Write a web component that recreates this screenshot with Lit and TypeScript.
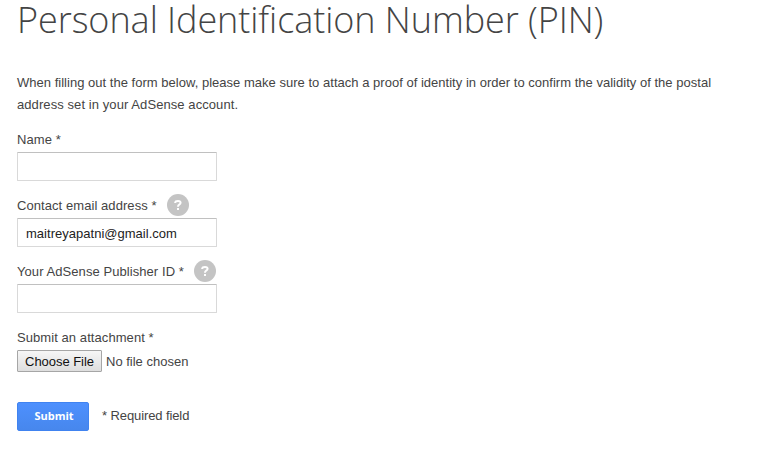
import { LitElement, html, css, nothing } from "lit";
import { customElement, property } from "lit/decorators.js";

@customElement("form-field")
class FormField extends LitElement {
  @property() label = "";
  @property() value = "";
  @property({ type: Boolean }) help = false;
  @property({ type: Boolean }) file = false;

  static styles = css`
    :host { display: block; height: 66px; }
    .label {
      display: flex; align-items: center; height: 23px; gap: 10.5px;
      box-sizing: border-box; padding-bottom: 1px; white-space: pre;
    }
    .help { width: 22px; height: 22px; flex: none; margin-top: -2px; }
    .disc { fill: #c4c4c4; }
    .mark { fill: none; stroke: #fff; stroke-width: 2; }
    .dot { fill: #fff; }
    .input {
      display: block; box-sizing: border-box; width: 200px; height: 29px; margin: 0;
      border: 1px solid #d9d9d9; border-top-color: #c0c0c0; border-radius: 1px;
      padding: 1px 8px 0; background: #fff; color: #222; outline: none;
      font: inherit; letter-spacing: 0.02px;
    }
    .picker { display: flex; align-items: center; gap: 4px; height: 22px; }
    .choose {
      box-sizing: border-box; width: 85px; height: 22px; padding: 0; margin: 0;
      border: 1px solid #a6a6a6; border-radius: 1px; white-space: nowrap;
      background: linear-gradient(#f6f6f6, #dedede); color: #111;
      font: inherit; line-height: 22px; letter-spacing: -0.04px;
    }
    .none { letter-spacing: 0; white-space: nowrap; padding-top: 2px; }
  `;

  render() {
    return html`
      <div class="label"><span>${this.label} *</span>${this.help
        ? html`<svg class="help" viewBox="0 0 22 22">
            <circle class="disc" cx="11" cy="11" r="11" />
            <path class="mark" d="M8.2 9V8.5Q8.4 6.9 11 6.9Q13.6 6.9 13.6 8.8Q13.6 10 12.2 10.7Q11 11.3 11 12.8" />
            <rect class="dot" x="10" y="14" width="2" height="2" />
          </svg>`
        : nothing}</div>
      ${this.file
        ? html`<div class="picker"><button class="choose">Choose File</button><span class="none">No file chosen</span></div>`
        : html`<input class="input" .value=${this.value} />`}
    `;
  }
}

@customElement("app-root")
class AppRoot extends LitElement {
  static styles = css`
    :host {
      display: block; box-sizing: border-box; width: 757px; height: 453px;
      padding-left: 17px; background: #fff; color: #444;
      font: 13px/22px "Liberation Sans", Arial, sans-serif; letter-spacing: 0.07px;
    }
    .title {
      margin: 0; height: 72px; line-height: 40px; white-space: nowrap; color: #444;
      font-family: "Open Sans", sans-serif; font-weight: 300; font-size: 36px; letter-spacing: -0.06px;
    }
    .intro { margin: 0 0 13px; white-space: nowrap; letter-spacing: 0.02px; }
    .tail { letter-spacing: 0.08px; }
    .actions { display: flex; align-items: center; gap: 13px; margin-top: 9px; height: 29px; }
    .submit {
      box-sizing: border-box; width: 72px; height: 29px; padding: 0 0 2px 2px; margin: 0;
      border: 1px solid #4083f0; border-radius: 2px; color: #fff;
      background: linear-gradient(#4d90fe, #4787ed);
      font: bold 11px "Open Sans", sans-serif; letter-spacing: 0;
    }
    .required { letter-spacing: -0.1px; margin-top: -2px; }
  `;

  render() {
    return html`
      <h1 class="title">Personal Identification Number (PIN)</h1>
      <p class="intro">When filling out the form below, please make sure to attach a proof of identity in order to confirm the validity of the postal<br /><span class="tail">address set in your AdSense account.</span></p>
      <form-field label="Name"></form-field>
      <form-field label="Contact email address" value="maitreyapatni@gmail.com" help></form-field>
      <form-field label="Your AdSense Publisher ID" help></form-field>
      <form-field label="Submit an attachment" file></form-field>
      <div class="actions"><button class="submit">Submit</button><span class="required">* Required field</span></div>
    `;
  }
}
